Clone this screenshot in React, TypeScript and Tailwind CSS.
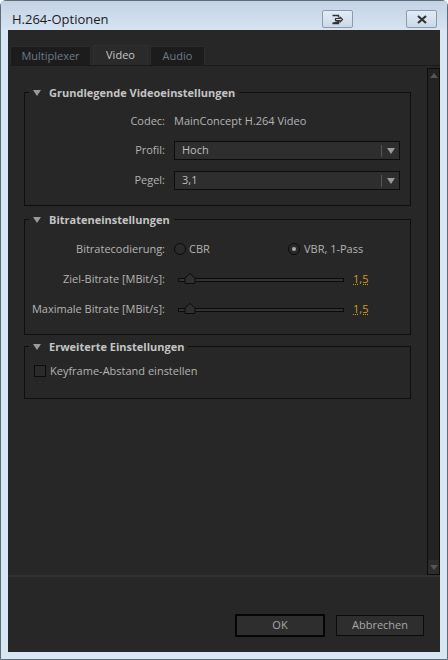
import React from 'react'

const font = { fontFamily: '"Open Sans", "Noto Sans", sans-serif' }

function Tri({ className = '' }: { className?: string }) {
  return (
    <svg width="8" height="6" viewBox="0 0 8 6" className={className}>
      <path d="M0 0 H8 L4 6 Z" fill="currentColor" />
    </svg>
  )
}

function Group({ title, children, className = '' }: { title: string; children: React.ReactNode; className?: string }) {
  return (
    <div className={`relative border border-[#0e0e0e] ${className}`}>
      <div className="absolute -top-[8px] left-[4px] flex items-center gap-[8px] bg-[#272727] px-[4px] text-[11px] font-bold leading-[16px] text-[#c4c4c4]">
        <Tri className="text-[#9a9a9a]" />
        <span>{title}</span>
      </div>
      {children}
    </div>
  )
}

function Select({ value }: { value: string }) {
  return (
    <div className="flex h-[19px] w-[226px] items-center border border-[#0c0c0c] bg-[#2e2e2e] text-[11px] text-[#bdbdbd]">
      <span className="flex-1 pl-[7px]">{value}</span>
      <div className="h-[12px] w-px bg-[#555]" />
      <div className="flex w-[17px] justify-center">
        <Tri className="text-[#9a9a9a]" />
      </div>
    </div>
  )
}

function Slider() {
  return (
    <div className="flex items-center">
      <div className="relative h-[10px] w-[166px]">
        <div className="absolute left-0 right-0 top-[4px] h-[4px] border border-[#0a0a0a] bg-[#333333]" />
        <svg width="12" height="11" viewBox="0 0 12 11" className="absolute left-[6px] top-[-1px]">
          <path d="M1 10.5 V5 L6 0.5 L11 5 V10.5 Z" fill="#2f2f2f" stroke="#0a0a0a" />
        </svg>
      </div>
      <span className="ml-[9px] text-[11px] leading-[14px] text-[#d69a1c] underline decoration-dotted decoration-[#d69a1c]">1,5</span>
    </div>
  )
}

function Radio({ checked }: { checked?: boolean }) {
  return (
    <div className="flex h-[12px] w-[12px] items-center justify-center rounded-full border border-[#0c0c0c] bg-[#2a2a2a]">
      {checked && <div className="h-[4px] w-[4px] rounded-full bg-[#aaaaaa]" />}
    </div>
  )
}

export default function App() {
  return (
    <div style={font} className="flex h-[660px] w-[448px] flex-col rounded-t-[6px] border border-[#5f6b78] bg-[#d8e5f3]">
      {/* title bar */}
      <div className="flex h-[29px] items-center bg-gradient-to-b from-[#c4d3e4] to-[#d6e3f1] pl-[11px] pr-[10px]">
        <span className="flex-1 pt-[9px] text-[13px] text-[#1c1c1c]">H.264-Optionen</span>
        <div className="mt-[7px] flex h-[18px] w-[31px] items-center justify-center rounded-[2px] border border-[#8c9aab] bg-gradient-to-b from-[#e3ecf6] to-[#cbd9e8]">
          <svg width="13" height="11" viewBox="0 0 13 11">
            <path d="M1.5 1.5 H7.5 V3.5 M7.5 7.5 V9.5 H1.5 Z" fill="none" stroke="#333" strokeWidth="1.4" />
            <path d="M4.5 4.5 H9 V3 L11.5 5.5 L9 8 V6.5 H4.5 Z" fill="none" stroke="#333" strokeWidth="1.2" strokeLinejoin="round" />
          </svg>
        </div>
        <div className="ml-[53px] mt-[7px] flex h-[18px] w-[31px] items-center justify-center rounded-[2px] border border-[#8c9aab] bg-gradient-to-b from-[#e3ecf6] to-[#cbd9e8]">
          <svg width="12" height="9" viewBox="0 0 12 9">
            <path d="M2 1 L10 8 M10 1 L2 8" stroke="#333" strokeWidth="2.2" />
          </svg>
        </div>
      </div>
      {/* client area */}
      <div className="mx-[7px] flex flex-1 flex-col bg-[#272727]">
        <div className="flex flex-col pl-[2px] pt-[16px]">
          <div className="flex h-[20px] items-end gap-[2px] border-b border-[#1a1a1a] text-[11px]">
            <div className="flex h-[19px] w-[81px] items-center justify-center border border-b-0 border-[#2c2c2c] bg-[#1c1c1c] text-[#6e7a87]">Multiplexer</div>
            <div className="flex h-[20px] w-[55px] items-center justify-center border border-b-0 border-[#2f2f2f] bg-[#2a2a2a] text-[#c6c6c6]">Video</div>
            <div className="flex h-[19px] w-[55px] items-center justify-center border border-b-0 border-[#2c2c2c] bg-[#1c1c1c] text-[#6e7a87]">Audio</div>
          </div>
        </div>
        <div className="flex h-[511px] border-b-2 border-[#303030]">
          <div className="flex flex-1 flex-col pl-[16px] pr-[16px] pt-[26px] text-[11px] text-[#b4b4b4]">
            <Group title="Grundlegende Videoeinstellungen" className="h-[114px]">
              <div className="grid grid-cols-[140px_1fr] items-center gap-x-[9px] pt-[18px]">
                <span className="text-right leading-[20px]">Codec:</span>
                <span className="leading-[20px]">MainConcept H.264 Video</span>
                <span className="mt-[10px] text-right">Profil:</span>
                <div className="mt-[10px]"><Select value="Hoch" /></div>
                <span className="mt-[11px] text-right">Pegel:</span>
                <div className="mt-[11px]"><Select value="3,1" /></div>
              </div>
            </Group>
            <Group title="Bitrateneinstellungen" className="mt-[13px] h-[116px]">
              <div className="grid grid-cols-[140px_1fr] items-center gap-x-[9px] pt-[19px]">
                <span className="text-right leading-[20px]">Bitratecodierung:</span>
                <div className="flex items-center">
                  <Radio />
                  <span className="ml-[3px] w-[99px]">CBR</span>
                  <Radio checked />
                  <span className="ml-[4px]">VBR, 1-Pass</span>
                </div>
                <span className="mt-[10px] text-right leading-[20px]">Ziel-Bitrate [MBit/s]:</span>
                <div className="mt-[10px] pl-[4px]"><Slider /></div>
                <span className="mt-[10px] whitespace-nowrap text-right leading-[20px]">Maximale Bitrate [MBit/s]:</span>
                <div className="mt-[10px] pl-[4px]"><Slider /></div>
              </div>
            </Group>
            <Group title="Erweiterte Einstellungen" className="mt-[11px] h-[53px]">
              <div className="flex items-center pl-[9px] pt-[16px] leading-[16px]">
                <div className="h-[12px] w-[12px] border border-[#0c0c0c] bg-[#2a2a2a]" />
                <span className="ml-[4px]">Keyframe-Abstand einstellen</span>
              </div>
            </Group>
          </div>
          {/* scrollbar */}
          <div className="mt-[2px] flex w-[13px] flex-col justify-between border border-[#0d0d0d] bg-[#222]">
            <div className="flex h-[12px] items-center justify-center">
              <svg width="8" height="5" viewBox="0 0 8 5"><path d="M0 5 L4 0 L8 5 Z" fill="#555" /></svg>
            </div>
            <div className="flex h-[14px] items-center justify-center bg-[#2c2c2c]">
              <svg width="8" height="5" viewBox="0 0 8 5"><path d="M0 0 L8 0 L4 5 Z" fill="#555" /></svg>
            </div>
          </div>
        </div>
        <div className="flex justify-end gap-[11px] pr-[16px] pt-[37px] text-[11px]">
          <button className="h-[23px] w-[90px] border-2 border-[#050505] bg-[#2e2e2e] text-[#a8a8a8]">OK</button>
          <button className="mt-[1px] h-[21px] w-[88px] border border-[#0a0a0a] bg-[#2e2e2e] text-[#a8a8a8]">Abbrechen</button>
        </div>
      </div>
      <div className="h-[7px]" />
    </div>
  )
}
